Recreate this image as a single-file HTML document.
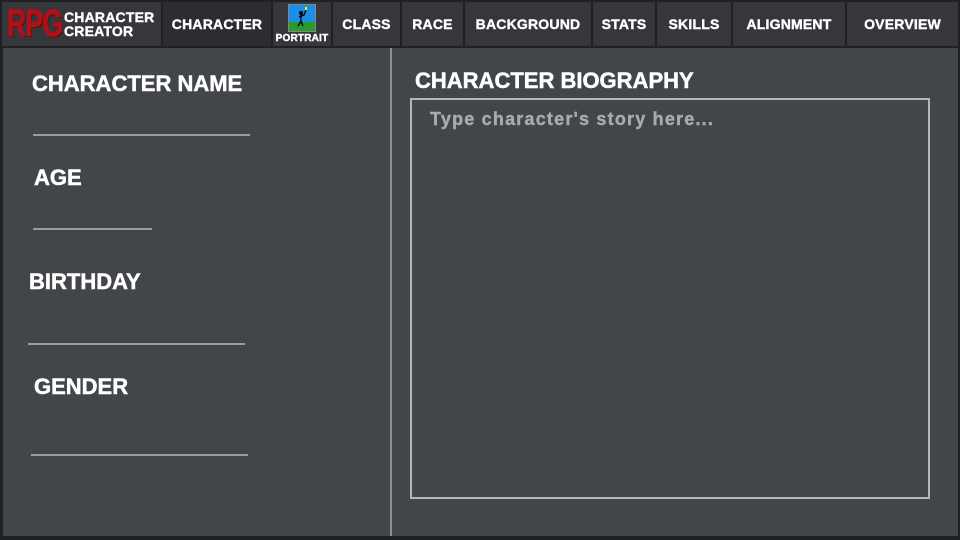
<!DOCTYPE html>
<html><head><style>
body{margin:0;width:960px;height:540px;background:#1f2022;font-family:"Liberation Sans",sans-serif;font-weight:bold;color:#fff;overflow:hidden;position:relative}
.nav{position:absolute;left:2px;top:2px;width:956px;height:44px;}
.tab{position:absolute;top:0;height:44px;background:#35373b;box-sizing:border-box;border-right:2px solid #1f2022;display:flex;align-items:center;justify-content:center;font-size:14px;letter-spacing:0.2px;-webkit-text-stroke:0.4px #fff}
.main{position:absolute;left:3px;top:48px;width:955px;height:488px;background:#424549}
.lbl{position:absolute;font-size:22px;-webkit-text-stroke:0.5px #fff}
.line{position:absolute;height:2px;background:#9a9da0}
</style></head><body>
<div class="nav">
<div class="tab" style="left:0;width:161px;justify-content:flex-start;overflow:hidden">
<span style="color:#b01018;font-size:38px;margin-left:5px;letter-spacing:-1px;text-shadow:1px 1px 0 #400;display:inline-block;transform:scaleX(0.7);transform-origin:left;width:55px;-webkit-text-stroke:1px #b01018;line-height:38px">RPG</span>
<span style="font-size:14px;line-height:14px;margin-left:2px;letter-spacing:0.2px">CHARACTER<br>CREATOR</span></div>
<div class="tab" style="left:161px;width:110px;background:#2c2d30">CHARACTER</div>
<div class="tab" style="left:271px;width:60px;flex-direction:column;justify-content:flex-start;font-size:10px">
<svg width="28" height="28" style="margin-top:2px" viewBox="0 0 28 28"><rect width="28" height="28" fill="#888"/><rect x="1" y="1" width="26" height="17" fill="#1a8ee8"/><rect x="1" y="18" width="26" height="9" fill="#2a9a2a"/><circle cx="13" cy="9" r="2" fill="#000"/><path d="M13 11 L13 17 M13 17 L10 22 M13 17 L15 22 M11 13 L16 11 L18 6" stroke="#000" stroke-width="1.3" fill="none"/><rect x="17" y="3" width="2" height="3" fill="#ff0"/></svg>
<span style="margin-top:1px">PORTRAIT</span></div>
<div class="tab" style="left:331px;width:69px">CLASS</div>
<div class="tab" style="left:400px;width:63px">RACE</div>
<div class="tab" style="left:463px;width:128px">BACKGROUND</div>
<div class="tab" style="left:591px;width:64px">STATS</div>
<div class="tab" style="left:655px;width:76px">SKILLS</div>
<div class="tab" style="left:731px;width:114px">ALIGNMENT</div>
<div class="tab" style="left:845px;width:111px;border-right:none">OVERVIEW</div>
</div>
<div class="main">
<div style="position:absolute;left:387px;top:0;width:2px;height:488px;background:#8c8f92"></div>
<div class="lbl" style="left:29px;top:23px">CHARACTER NAME</div>
<div class="line" style="left:30px;top:86px;width:217px"></div>
<div class="lbl" style="left:31px;top:117px">AGE</div>
<div class="line" style="left:30px;top:180px;width:119px"></div>
<div class="lbl" style="left:26px;top:221px">BIRTHDAY</div>
<div class="line" style="left:25px;top:295px;width:217px"></div>
<div class="lbl" style="left:31px;top:326px">GENDER</div>
<div class="line" style="left:28px;top:406px;width:217px"></div>
<div class="lbl" style="left:412px;top:20px">CHARACTER BIOGRAPHY</div>
<div style="position:absolute;left:407px;top:50px;width:516px;height:397px;border:2px solid #b4b6b8;"></div>
<div style="position:absolute;left:427px;top:61px;font-size:18px;letter-spacing:1.2px;color:#a8abae;-webkit-text-stroke:0.4px #a8abae">Type character's story here...</div>
</div>
</body></html>
